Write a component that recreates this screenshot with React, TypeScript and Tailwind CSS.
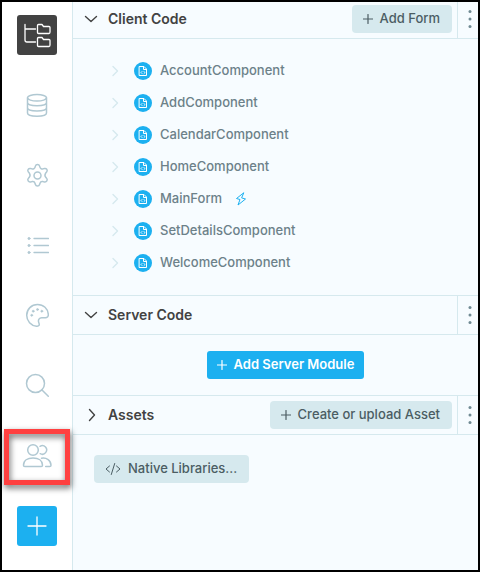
import type { ReactNode } from "react";

function Glyph({ children, size = 24, width = 1.5 }: { children: ReactNode; size?: number; width?: number }) {
  return (
    <svg
      width={size}
      height={size}
      viewBox={`0 0 ${size} ${size}`}
      fill="none"
      stroke="currentColor"
      strokeWidth={width}
      strokeLinecap="round"
      strokeLinejoin="round"
      aria-hidden="true"
      className="shrink-0"
    >
      {children}
    </svg>
  );
}

function FoldersIcon() {
  return (
    <Glyph size={40} width={1.3}>
      <path d="M8 9.500V25q0 2 2 2h8.500M8 14h10.500" />
      <path d="M20.500 17.500v-7q0-1 1-1H25l1.500 2h5.500q1 0 1 1v4.500q0 1.500-1 1.500H21.500q-1 0-1-1z" />
      <path d="M20.500 30.500v-7q0-1 1-1H25l1.500 2h5.500q1 0 1 1v4.500q0 1.500-1 1.500H21.500q-1 0-1-1z" />
    </Glyph>
  );
}

function DatabaseIcon() {
  return (
    <Glyph>
      <ellipse cx="12" cy="4.800" rx="9.500" ry="3.300" />
      <path d="M2.500 5v15c0 4.300 19 4.300 19 0V5M2.500 9.500c0 4.300 19 4.300 19 0M2.500 14.800c0 4.300 19 4.300 19 0" />
    </Glyph>
  );
}

function GearIcon() {
  return (
    <Glyph>
      <circle cx="12.500" cy="12.500" r="3.500" />
      <path d="M10.400 3.100c.6-2.100 3.600-2.100 4.200 0l.4 1.300c.4 1.300 1.800 1.900 3 1.500l1.400-.4c2.100-.6 3.700 1.900 2.200 3.600l-.9 1c-.9 1.300-.9 3 0 4.100l.9 1.100c1.500 1.700-.1 4.200-2.200 3.700l-1.400-.4c-1.300-.3-2.600.4-3 1.600l-.4 1.300c-.6 2.100-3.600 2.100-4.200 0L10 20.200c-.4-1.200-1.700-1.900-3-1.600l-1.400.4c-2.100.5-3.700-2-2.200-3.700l.9-1.100c.9-1.100.9-2.800 0-4.100l-.9-1C1.900 7.400 3.500 4.900 5.600 5.500l1.400.4c1.200.4 2.600-.2 3-1.500z" />
    </Glyph>
  );
}

function ListIcon() {
  return (
    <Glyph width={1.3}>
      <path d="M9 5.500h14.500M9 12.500h14.500M9 19.500h14.500" />
      <g fill="currentColor" strokeWidth="1">
        <circle cx="4" cy="5.500" r="1" />
        <circle cx="4" cy="12.500" r="1" />
        <circle cx="4" cy="19.500" r="1" />
      </g>
    </Glyph>
  );
}

function PaletteIcon() {
  return (
    <Glyph>
      <path d="M23.300 11.500C23 5.500 18.500 1.500 12.500 1.500 6.500 1.500 1.700 6.200 1.700 12.300c0 5.700 4.300 10.300 9.800 10.900 2.700.3 3.200-1.200 2.400-3.200-1.300-3 .4-5.400 3.200-5.200 3.500.2 6.500.3 6.200-3.300z" />
      <g fill="currentColor" strokeWidth="0.600">
        <circle cx="12.500" cy="6.500" r="1" />
        <circle cx="16.800" cy="8.200" r="1" />
        <circle cx="8.200" cy="8.200" r="1" />
        <circle cx="6.700" cy="12.300" r="1" />
      </g>
    </Glyph>
  );
}

function SearchIcon() {
  return (
    <Glyph>
      <circle cx="10.500" cy="10.500" r="9" />
      <path d="M17 17l6.300 6.300" />
    </Glyph>
  );
}

function UsersIcon() {
  return (
    <Glyph size={30} width={1.5}>
      <circle cx="11" cy="10" r="5.300" />
      <path d="M2.800 26.500q-1.300 0-1.300-1.300c0-4.500 4-7.200 9.500-7.200s9.500 2.700 9.500 7.200q0 1.300-1.300 1.300z" />
      <path d="M18 6.300a4.300 4.300 0 1 1 .2 7.400M19.500 18.200c5-.8 9.500 2 9.500 7q0 1.300-1.300 1.300h-4" />
    </Glyph>
  );
}

function PlusIcon() {
  return (
    <Glyph size={10} width={1.2}>
      <path d="M5 0.500v9M0.500 5h9" />
    </Glyph>
  );
}

function CodeIcon() {
  return (
    <Glyph size={16} width={1}>
      <path d="M4.500 5L1 8l3.500 3M11.500 5L15 8l-3.500 3M9.700 2.500L6.300 13.500" />
    </Glyph>
  );
}

function FormIcon() {
  return (
    <span className="flex size-[18px] shrink-0 items-center justify-center rounded-full bg-[#1cb0f0] text-white">
      <Glyph size={10} width={1}>
        <path d="M1.500 0.500h4.500l2.500 2.500v6.500h-7zM5.500 0.500v3h3" />
        <path d="M4 5.500L3 6.500l1 1M6 5.500l1 1-1 1" strokeWidth="0.900" />
      </Glyph>
    </span>
  );
}

const tools = [
  { name: "Database", icon: <DatabaseIcon /> },
  { name: "Settings", icon: <GearIcon /> },
  { name: "Outline", icon: <ListIcon /> },
  { name: "Theme", icon: <PaletteIcon /> },
  { name: "Search", icon: <SearchIcon /> },
];

const forms = [
  "AccountComponent",
  "AddComponent",
  "CalendarComponent",
  "HomeComponent",
  "MainForm",
  "SetDetailsComponent",
  "WelcomeComponent",
];

function SoftButton({ icon, children }: { icon: ReactNode; children: ReactNode }) {
  return (
    <button className="flex h-7 items-center gap-[7px] rounded bg-[#d6e9ee] pr-3 pl-[11px] text-[13px] font-medium whitespace-nowrap text-[#4b5d63]">
      {icon}
      {children}
    </button>
  );
}

function SectionHeader({ title, open, first, action }: { title: string; open: boolean; first?: boolean; action?: ReactNode }) {
  return (
    <div className={first ? "flex h-[37px] border-b border-[#d6e9ee]" : "flex h-10 border-y border-[#d6e9ee]"}>
      <div className={first ? "flex flex-1 items-center pr-[5px] pb-0.5 pl-[11px]" : "flex flex-1 items-center pr-[5px] pl-[11px]"}>
        <button aria-expanded={open} className="flex flex-1 items-center gap-[10px] text-sm font-semibold text-[#424242]">
          <Glyph size={14} width={1.4}>
            {open ? <path d="M1.500 4.500L7 9.500l5.500-5" /> : <path d="M5.500 1.500l5 5.500-5 5.500" />}
          </Glyph>
          {title}
        </button>
        {action}
      </div>
      <button
        aria-label={`${title} menu`}
        className={
          first
            ? "flex w-[21px] items-center justify-center border-l border-[#d6e9ee] pb-0.5 pl-1 text-[#708a93]"
            : "flex w-[21px] items-center justify-center border-l border-[#d6e9ee] pl-1 text-[#708a93]"
        }
      >
        <svg width="4" height="20" viewBox="0 0 4 20" fill="currentColor" aria-hidden="true">
          <circle cx="2" cy="2.500" r="1.500" />
          <circle cx="2" cy="10" r="1.500" />
          <circle cx="2" cy="17.500" r="1.500" />
        </svg>
      </button>
    </div>
  );
}

export default function App() {
  return (
    <div className="flex min-h-screen border-2 border-black bg-[#f7fcff] font-['Inter',sans-serif]">
      <nav aria-label="Tools" className="flex w-[71px] shrink-0 flex-col items-center justify-between border-r border-[#d6e9ee] bg-white pt-[13px] pb-6 text-[#b0c8d2]">
        <div className="flex flex-col gap-[30px]">
          <button aria-label="App files" className="flex size-10 items-center justify-center rounded-[3px] bg-[#424242] text-white">
            <FoldersIcon />
          </button>
          {tools.map((tool) => (
            <button key={tool.name} aria-label={tool.name} className="flex size-10 items-center justify-center">
              {tool.icon}
            </button>
          ))}
          <button aria-label="Users" className="relative flex size-10 items-center justify-center">
            <UsersIcon />
            <span className="absolute -inset-x-[13px] -top-1.5 -bottom-2.5 border-5 border-[#ff4040] drop-shadow-[1px_3px_3px_rgba(0,0,0,0.6)]" />
          </button>
        </div>
        <button aria-label="Add" className="flex size-10 items-center justify-center rounded-[3px] bg-[#1cb0f0] text-white">
          <Glyph size={20} width={1.3}>
            <path d="M10 1v18M1 10h18" />
          </Glyph>
        </button>
      </nav>

      <main className="min-w-0 flex-1">
        <section>
          <SectionHeader title="Client Code" open first action={<SoftButton icon={<PlusIcon />}>Add Form</SoftButton>} />
          <ul className="py-4 pl-9">
            {forms.map((form) => (
              <li key={form} className="flex h-8 items-center text-[13px] text-[#6c8189]">
                <span className="mr-[13px] text-[#d6e9ee]">
                  <Glyph size={12} width={1.4}>
                    <path d="M4 1.500L8.500 6 4 10.500" />
                  </Glyph>
                </span>
                <FormIcon />
                <button className="ml-2 font-medium">{form}</button>
                {form === "MainForm" && (
                  <span className="ml-3 text-[#1cb0f0]">
                    <Glyph size={14} width={1}>
                      <path d="M9.500 1L2.500 6.500l3.500 1L4 13l7.500-6-3.500-1z" />
                    </Glyph>
                  </span>
                )}
              </li>
            ))}
          </ul>
        </section>

        <section>
          <SectionHeader title="Server Code" open />
          <div className="flex justify-center py-4 pl-5">
            <button className="flex h-7 items-center gap-[7px] rounded-[3px] bg-[#1cb0f0] px-[10px] text-[13px] font-semibold whitespace-nowrap text-white">
              <PlusIcon />
              Add Server Module
            </button>
          </div>
        </section>

        <section>
          <SectionHeader title="Assets" open={false} action={<SoftButton icon={<PlusIcon />}>Create or upload Asset</SoftButton>} />
          <div className="px-[21px] py-5">
            <SoftButton icon={<CodeIcon />}>Native Libraries...</SoftButton>
          </div>
        </section>
      </main>
    </div>
  );
}
